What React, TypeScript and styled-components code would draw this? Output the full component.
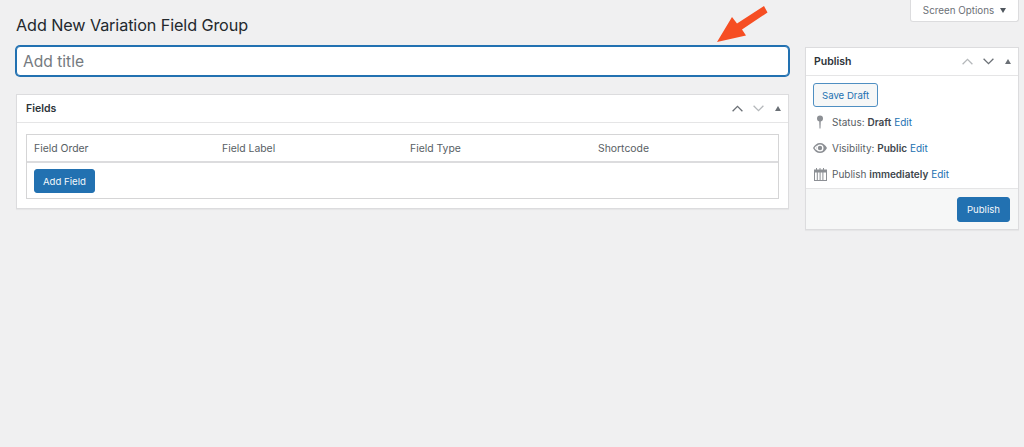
import React from "react";
import styled, { createGlobalStyle } from "styled-components";

const Global = createGlobalStyle`
  html, body { margin: 0; padding: 0; background: #f0f0f1; }
  body { font-family: Inter, "Liberation Sans", sans-serif; color: #50575e; font-size: 10.4px; }
  #root { width: 1024px; height: 447px; overflow: hidden; }
`;

const Page = styled.div`
  width: 1024px;
  height: 447px;
  padding: 0 5px 0 16px;
  box-sizing: border-box;
  background: #f0f0f1;
  overflow: hidden;
`;
const Header = styled.header`
  display: flex;
  justify-content: space-between;
  align-items: flex-start;
  height: 46px;
`;
const Title = styled.h1`
  margin: 14px 0 0;
  font-size: 16.2px;
  line-height: 22px;
  font-weight: 400;
  color: #23282d;
  letter-spacing: -0.1px;
`;
const ScreenOptions = styled.button`
  display: flex;
  align-items: center;
  justify-content: center;
  gap: 6px;
  width: 109px;
  height: 22px;
  box-sizing: border-box;
  padding: 0;
  background: #fff;
  border: 1px solid #dcdcde;
  border-top: 0;
  border-radius: 0 0 3px 3px;
  font-family: inherit;
  font-size: 9.8px;
  color: #6b7076;
`;
const Columns = styled.div`
  display: flex;
  align-items: flex-start;
  gap: 15px;
`;
const Main = styled.main`
  width: 774px;
  display: flex;
  flex-direction: column;
  gap: 18px;
`;
const TitleInput = styled.input`
  display: block;
  width: 773px;
  height: 30px;
  box-sizing: border-box;
  padding: 0 6px;
  border: 1px solid #2271b1;
  border-radius: 4px;
  box-shadow: 0 0 0 1px #2271b1;
  outline: 0;
  font-family: inherit;
  font-size: 15.6px;
  background: #fff;
  &::placeholder { color: #757a80; opacity: 1; }
`;
const Box = styled.section<{ $w?: number }>`
  width: ${(p) => (p.$w ? `${p.$w}px` : "773px")};
  box-sizing: border-box;
  background: #fff;
  border: 1px solid #dcdcde;
  box-shadow: 0 1px 1px rgba(0, 0, 0, 0.04);
`;
const BoxHead = styled.div<{ $pad: number }>`
  display: flex;
  align-items: center;
  justify-content: space-between;
  height: 27px;
  padding: 0 7px 0 ${(p) => p.$pad}px;
  border-bottom: 1px solid #e5e5e6;
`;
const BoxTitle = styled.h2`
  margin: 0;
  font-size: 10.5px;
  font-weight: 600;
  color: #2c3338;
`;
const Handles = styled.div`
  display: flex;
  align-items: center;
  gap: 10px;
`;
const Handle = styled.svg`
  display: block;
  flex: none;
`;
const TriHandle = styled(Handle)`
  margin-left: 1px;
`;
const FieldsBody = styled.div`
  padding: 11px 9px 9px;
`;
const Table = styled.div`
  border: 1px solid #d5d5d6;
`;
const TableHead = styled.div`
  display: grid;
  grid-template-columns: repeat(4, 188px);
  align-items: center;
  height: 26px;
  padding: 0 7px;
  border-bottom: 2px solid #dcdcde;
  color: #585e64;
`;
const TableFoot = styled.div`
  padding: 6px 7px 5px;
`;
const Primary = styled.button<{ $h?: number; $pad?: number }>`
  display: block;
  height: ${(p) => p.$h ?? 24}px;
  padding: 0 ${(p) => p.$pad ?? 8}px;
  background: #2271b1;
  border: 1px solid #2271b1;
  border-radius: 3px;
  color: #f4f8fb;
  font-family: inherit;
  font-size: 9.6px;
`;
const Sidebar = styled.aside`
  width: 214px;
  margin-top: 1px;
`;
const PublishBody = styled.div`
  padding: 7px 7px 0;
`;
const SaveDraft = styled.button`
  display: block;
  height: 24px;
  padding: 0 8px;
  background: #f6f7f7;
  border: 1px solid #4f8fc2;
  border-radius: 3px;
  color: #2271b1;
  font-family: inherit;
  font-size: 9.6px;
`;
const MetaList = styled.div`
  display: flex;
  flex-direction: column;
  margin-top: 2px;
  padding-bottom: 1px;
`;
const Meta = styled.div`
  display: flex;
  align-items: center;
  gap: 5px;
  height: 26px;
  font-size: 10px;
  color: #585e64;
`;
const MetaIconSlot = styled.span`
  display: flex;
  justify-content: center;
  width: 14px;
  flex: none;
`;
const MetaIcon = styled.svg`
  display: block;
`;
const MetaText = styled.span`
  b { font-weight: 600; color: #40464c; }
`;
const EditLink = styled.a`
  color: #2271b1;
  text-decoration: none;
`;
const PublishFoot = styled.div`
  display: flex;
  justify-content: flex-end;
  padding: 8px 8px 7px;
  background: #f6f7f7;
  border-top: 1px solid #e5e5e6;
`;
const Arrow = styled.svg`
  position: absolute;
  left: 716px;
  top: 5px;
`;

const Up = ({ c }: { c: string }) => (
  <Handle width="11" height="7" viewBox="0 0 11 7" fill="none" stroke={c} strokeWidth="1.3"><path d="M.6 6.200L5.500 1.300l4.900 4.900" /></Handle>
);
const Down = ({ c }: { c: string }) => (
  <Handle width="11" height="7" viewBox="0 0 11 7" fill="none" stroke={c} strokeWidth="1.3"><path d="M.6.8l4.900 4.900L10.400.8" /></Handle>
);
const Tri = () => (
  <TriHandle width="6" height="5" viewBox="0 0 6 5" fill="#6b7076"><path d="M3 0l3 5H0z" /></TriHandle>
);

export default function App() {
  return (
    <Page>
      <Global />
      <Header>
        <Title>Add New Variation Field Group</Title>
        <ScreenOptions>
          Screen Options
          <svg width="6" height="5" viewBox="0 0 6 5" fill="#50575e"><path d="M0 0h6L3 5z" /></svg>
        </ScreenOptions>
      </Header>
      <Arrow width="54" height="40" viewBox="0 0 54 40" fill="#f64e23">
        <path d="M1 37L16 12l5 6.500L48 1l3.500 6.500L26 24.500l4 6z" />
      </Arrow>
      <Columns>
        <Main>
          <TitleInput placeholder="Add title" />
          <Box>
            <BoxHead $pad={9}>
              <BoxTitle>Fields</BoxTitle>
              <Handles>
                <Up c="#6b7076" />
                <Down c="#b5b8bb" />
                <Tri />
              </Handles>
            </BoxHead>
            <FieldsBody>
              <Table>
                <TableHead>
                  <span>Field Order</span>
                  <span>Field Label</span>
                  <span>Field Type</span>
                  <span>Shortcode</span>
                </TableHead>
                <TableFoot>
                  <Primary>Add Field</Primary>
                </TableFoot>
              </Table>
            </FieldsBody>
          </Box>
        </Main>
        <Sidebar>
          <Box $w={214}>
            <BoxHead $pad={8}>
              <BoxTitle>Publish</BoxTitle>
              <Handles>
                <Up c="#b5b8bb" />
                <Down c="#6b7076" />
                <Tri />
              </Handles>
            </BoxHead>
            <PublishBody>
              <SaveDraft>Save Draft</SaveDraft>
              <MetaList>
                <Meta>
                  <MetaIconSlot>
                    <MetaIcon width="8" height="14" viewBox="0 0 8 14" fill="#8c8f94">
                      <circle cx="4" cy="3.500" r="3" />
                      <path d="M3.200 5h1.600l-.3 8.500h-1z" />
                    </MetaIcon>
                  </MetaIconSlot>
                  <MetaText>Status: <b>Draft</b> <EditLink>Edit</EditLink></MetaText>
                </Meta>
                <Meta>
                  <MetaIconSlot>
                    <MetaIcon width="14" height="10" viewBox="0 0 14 10" fill="#8c8f94">
                      <path fillRule="evenodd" d="M7 0c3 0 5.500 2 7 5-1.500 3-4 5-7 5S1.500 8 0 5c1.500-3 4-5 7-5zM7 1.500a3.500 3.500 0 100 7 3.500 3.500 0 000-7zM1.500 5C2.200 6 3 6.900 4 7.500A4.500 4.500 0 014 2.500C3 3.100 2.200 4 1.500 5z" />
                      <circle cx="7" cy="5" r="2.200" />
                    </MetaIcon>
                  </MetaIconSlot>
                  <MetaText>Visibility: <b>Public</b> <EditLink>Edit</EditLink></MetaText>
                </Meta>
                <Meta>
                  <MetaIconSlot>
                    <MetaIcon width="13" height="13" viewBox="0 0 13 13" fill="#8c8f94">
                      <path fillRule="evenodd" d="M0 1.500h2V0h1v1.500h2.500V0h1v1.500H9V0h1v1.500h3V13H0zM1 4.500V12h1.800V4.500zM3.800 4.500V12h1.800V4.500zM6.600 4.500V12h1.800V4.500zM9.400 4.500V12H12V4.500z" />
                    </MetaIcon>
                  </MetaIconSlot>
                  <MetaText>Publish <b>immediately</b> <EditLink>Edit</EditLink></MetaText>
                </Meta>
              </MetaList>
            </PublishBody>
            <PublishFoot>
              <Primary $h={25} $pad={9}>Publish</Primary>
            </PublishFoot>
          </Box>
        </Sidebar>
      </Columns>
    </Page>
  );
}
